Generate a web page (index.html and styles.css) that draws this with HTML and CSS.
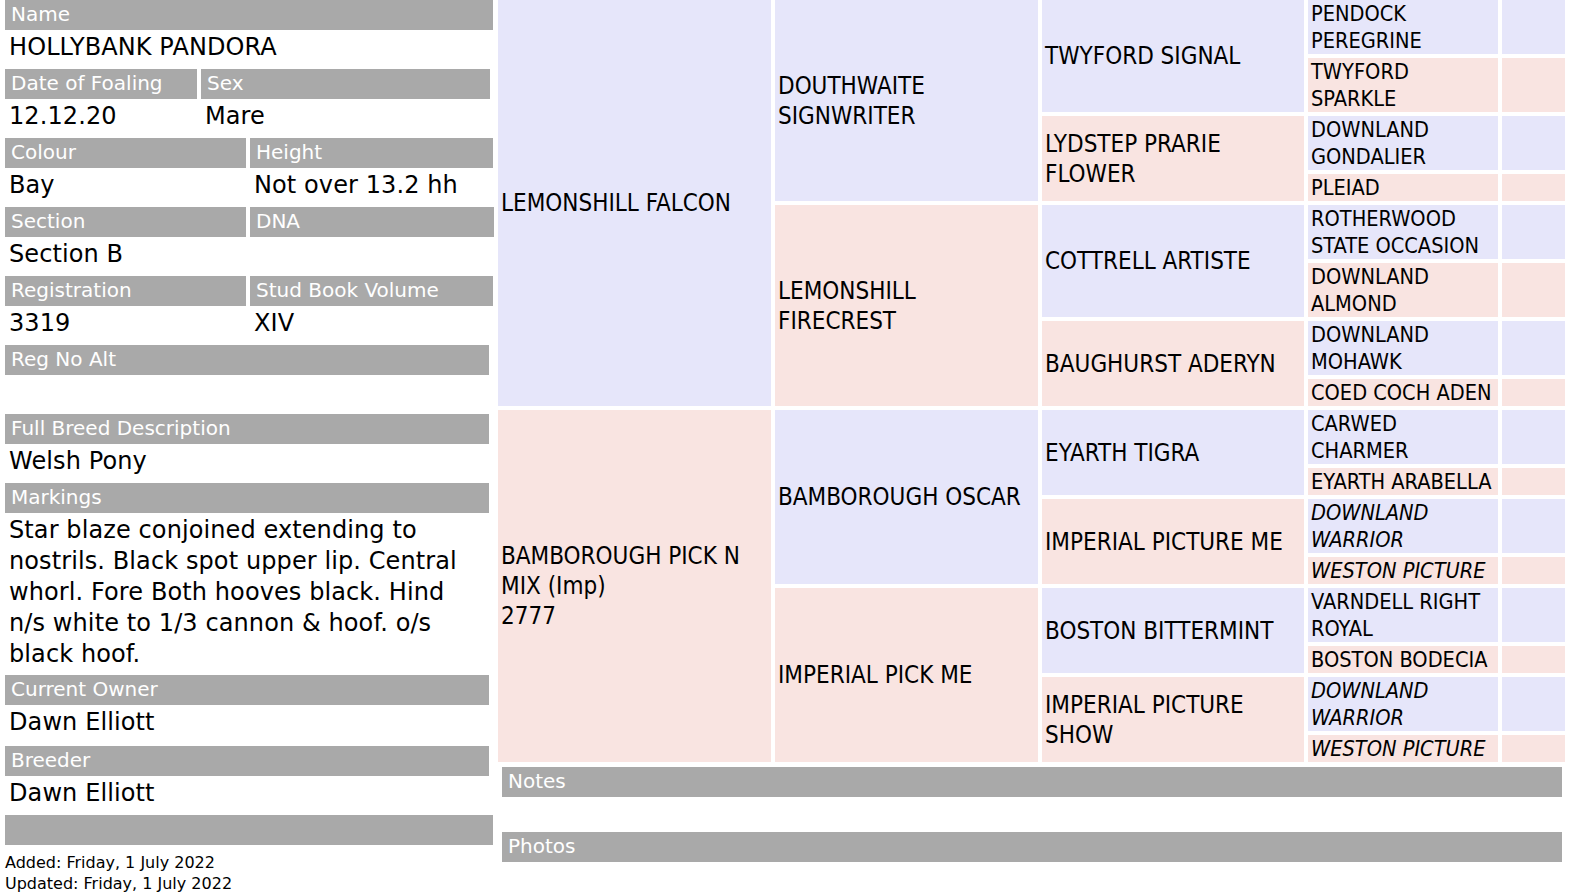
FILE: index.html
```html
<!DOCTYPE html>
<html lang="en">
<head>
<meta charset="utf-8">
<title>HOLLYBANK PANDORA</title>
<link rel="stylesheet" href="styles.css">
</head>
<body>
<div class="page">
  <div class="panel">
    <div class="bar">Name</div>
    <div class="val">HOLLYBANK PANDORA</div>

    <div class="pair">
      <div class="cell c-dof"><div class="bar">Date of Foaling</div><div class="val">12.12.20</div></div>
      <div class="cell c-sex"><div class="bar">Sex</div><div class="val">Mare</div></div>
    </div>
    <div class="pair">
      <div class="cell c-half"><div class="bar">Colour</div><div class="val">Bay</div></div>
      <div class="cell c-half2"><div class="bar">Height</div><div class="val">Not over 13.2 hh</div></div>
    </div>
    <div class="pair">
      <div class="cell c-half"><div class="bar">Section</div><div class="val">Section B</div></div>
      <div class="cell c-half3"><div class="bar">DNA</div><div class="val"></div></div>
    </div>
    <div class="pair">
      <div class="cell c-half"><div class="bar">Registration</div><div class="val">3319</div></div>
      <div class="cell c-half2"><div class="bar">Stud Book Volume</div><div class="val">XIV</div></div>
    </div>

    <div class="bar narrow">Reg No Alt</div>
    <div class="val"></div>

    <div class="bar narrow">Full Breed Description</div>
    <div class="val">Welsh Pony</div>

    <div class="bar narrow">Markings</div>
    <div class="val markings">Star blaze conjoined extending to nostrils. Black spot upper lip. Central whorl. Fore Both hooves black. Hind n/s white to 1/3 cannon &amp; hoof. o/s black hoof.</div>

    <div class="bar narrow">Current Owner</div>
    <div class="val owner">Dawn Elliott</div>

    <div class="bar narrow">Breeder</div>
    <div class="val">Dawn Elliott</div>

    <div class="bar"></div>
    <div class="meta">Added: Friday, 1 July 2022<br>Updated: Friday, 1 July 2022</div>
  </div>

  <div class="right">
    <div class="pedigree">
      <div class="p g1 s8 m">LEMONSHILL FALCON</div>
      <div class="p g2 s4 m">DOUTHWAITE SIGNWRITER</div>
      <div class="p g3 s2 m">TWYFORD SIGNAL</div>
      <div class="q m">PENDOCK PEREGRINE</div>
      <div class="e m"></div>
      <div class="q f">TWYFORD SPARKLE</div>
      <div class="e f"></div>
      <div class="p g3 s2 f">LYDSTEP PRARIE FLOWER</div>
      <div class="q m">DOWNLAND GONDALIER</div>
      <div class="e m"></div>
      <div class="q f">PLEIAD</div>
      <div class="e f"></div>

      <div class="p g2 s4 f">LEMONSHILL FIRECREST</div>
      <div class="p g3 s2 m">COTTRELL ARTISTE</div>
      <div class="q m">ROTHERWOOD STATE OCCASION</div>
      <div class="e m"></div>
      <div class="q f">DOWNLAND ALMOND</div>
      <div class="e f"></div>
      <div class="p g3 s2 f">BAUGHURST ADERYN</div>
      <div class="q m">DOWNLAND MOHAWK</div>
      <div class="e m"></div>
      <div class="q f">COED COCH ADEN</div>
      <div class="e f"></div>

      <div class="p g1 s8 f">BAMBOROUGH PICK N MIX (Imp)<br>2777</div>
      <div class="p g2 s4 m">BAMBOROUGH OSCAR</div>
      <div class="p g3 s2 m">EYARTH TIGRA</div>
      <div class="q m">CARWED CHARMER</div>
      <div class="e m"></div>
      <div class="q f">EYARTH ARABELLA</div>
      <div class="e f"></div>
      <div class="p g3 s2 f">IMPERIAL PICTURE ME</div>
      <div class="q m it">DOWNLAND WARRIOR</div>
      <div class="e m"></div>
      <div class="q f it">WESTON PICTURE</div>
      <div class="e f"></div>

      <div class="p g2 s4 f">IMPERIAL PICK ME</div>
      <div class="p g3 s2 m">BOSTON BITTERMINT</div>
      <div class="q m">VARNDELL RIGHT ROYAL</div>
      <div class="e m"></div>
      <div class="q f">BOSTON BODECIA</div>
      <div class="e f"></div>
      <div class="p g3 s2 f">IMPERIAL PICTURE SHOW</div>
      <div class="q m it">DOWNLAND WARRIOR</div>
      <div class="e m"></div>
      <div class="q f it">WESTON PICTURE</div>
      <div class="e f"></div>
    </div>

    <div class="bar wide notes">Notes</div>
    <div class="blank"></div>
    <div class="bar wide">Photos</div>
  </div>
</div>
</body>
</html>
```

FILE: styles.css
```css
html, body {
  margin: 0;
  padding: 0;
  background: #ffffff;
}

body {
  font-family: "DejaVu Sans", Verdana, sans-serif;
  color: #000000;
}

.page {
  display: flex;
  align-items: flex-start;
}

/* ---------- left panel ---------- */
.panel {
  width: 488px;
  margin-left: 5px;
  display: flex;
  flex-direction: column;
  flex: none;
}

.bar {
  background: #a9a9a9;
  color: #ffffff;
  font-size: 20px;
  line-height: 24px;
  height: 24px;
  padding: 2px 6px 4px;
}

.bar.narrow {
  width: 472px;
}

.val {
  font-size: 24px;
  line-height: 31px;
  min-height: 31px;
  padding: 2px 4px 0;
  margin-bottom: 6px;
  letter-spacing: 0.1px;
}

.val.markings {
  margin-bottom: 5px;
  padding-right: 20px;
}

.val.owner {
  margin-bottom: 8px;
}

.pair {
  display: flex;
  gap: 4px;
}

.cell {
  display: flex;
  flex-direction: column;
  flex: none;
}

.c-dof { width: 192px; }
.c-sex { width: 289px; }
.c-half { width: 241px; }
.c-half2 { width: 243px; }
.c-half3 { width: 244px; }

.meta {
  margin-top: 7px;
  font-size: 16px;
  line-height: 21px;
}

/* ---------- pedigree ---------- */
.right {
  margin-left: 5px;
  width: 1067px;
  flex: none;
  display: flex;
  flex-direction: column;
}

.pedigree {
  display: grid;
  grid-template-columns: 273px 263px 262px 190px 63px;
  gap: 4px;
  font-family: "DejaVu Sans Condensed", "DejaVu Sans", sans-serif;
  font-stretch: condensed;
}

.m { background: #e6e6fa; }
.f { background: #f9e4e1; }

.p {
  font-size: 24px;
  line-height: 30px;
  padding: 0 3px;
  display: flex;
  align-items: center;
}

.g1 { grid-column: 1; }
.g2 { grid-column: 2; }
.g3 { grid-column: 3; }
.s8 { grid-row: span 8; }
.s4 { grid-row: span 4; }
.s2 { grid-row: span 2; }

.q {
  grid-column: 4;
  font-size: 21.6px;
  line-height: 27px;
  padding: 0 3px;
}

.e {
  grid-column: 5;
}

.it { font-style: italic; }

.bar.wide {
  margin-left: 4px;
  width: 1048px;
}

.bar.notes {
  margin-top: 5px;
}

.blank {
  height: 35px;
}
```
